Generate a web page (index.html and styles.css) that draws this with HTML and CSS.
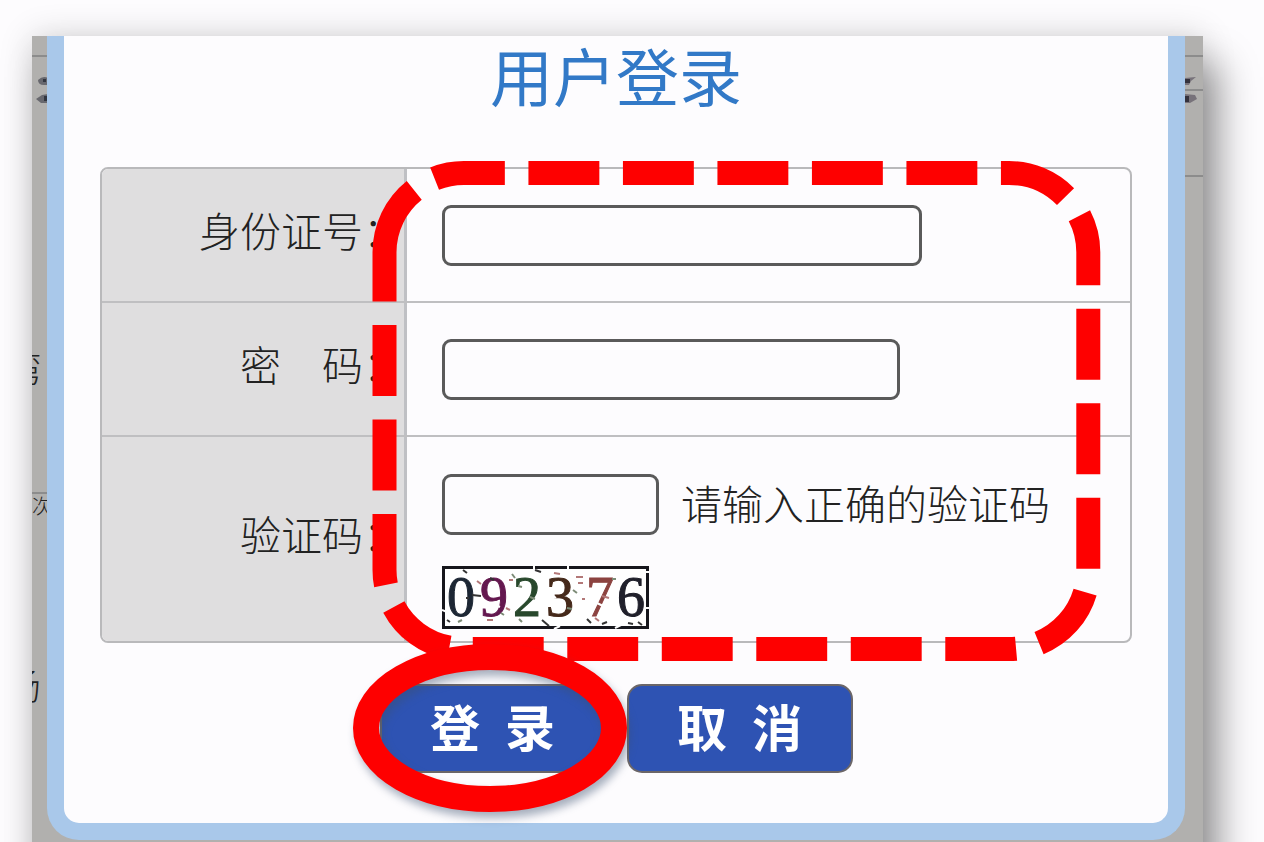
FILE: index.html
```html
<!DOCTYPE html>
<html lang="zh-CN">
<head>
    <meta charset="UTF-8">
    <meta name="viewport" content="width=device-width, initial-scale=1.0">
    <title>用户登录</title>
    <link rel="stylesheet" href="styles.css">
</head>
<body>
    <div class="page">
        <!-- page behind the dialog, only its edges are visible -->
        <div class="backdrop" aria-hidden="true">
            <i class="rule rule-top"></i>
            <i class="rule rule-right rule-nav"></i>
            <i class="rule rule-right rule-banner"></i>
            <i class="rule rule-left rule-box"></i>
            <svg class="smudge smudge-left" viewBox="0 0 16 32">
                <path d="M6 5 Q11 0 16 3 V10 H12 Q6 10 6 5Z M4 24 L10 20 L16 19 V28 H9Z" fill="#68686e"/>
                <path d="M11 4h3v3h-3z M12 21h3v5h-3z" fill="#33363f"/>
            </svg>
            <svg class="smudge smudge-right" viewBox="0 0 16 32">
                <path d="M0 3 L11 2 L6 6 L4 10 H0Z M0 19 L10 20 L12 24 L5 28 H0Z" fill="#77727a"/>
                <path d="M0 4h5v4H0z M0 21h4v6H0z" fill="#35323c"/>
            </svg>
            <span class="ghost ghost-one">湾</span>
            <span class="ghost ghost-two">次</span>
            <span class="ghost ghost-three">场</span>
        </div>

        <form class="dialog">
            <h1 class="title">用户登录</h1>

            <div class="panel">
                <div class="row">
                    <label class="label" for="idNumber">身份证号：</label>
                    <div class="field">
                        <input class="input input-id" type="text" id="idNumber">
                    </div>
                </div>
                <div class="row">
                    <label class="label" for="password">密　码：</label>
                    <div class="field">
                        <input class="input input-password" type="password" id="password">
                    </div>
                </div>
                <div class="row row-captcha">
                    <label class="label" for="captcha">验证码：</label>
                    <div class="field">
                        <div class="captcha-line">
                            <input class="input input-captcha" type="text" id="captcha">
                            <span class="hint">请输入正确的验证码</span>
                        </div>
                        <svg class="captcha" viewBox="0 0 207 63" role="img" aria-label="092376">
                            <rect x="1.5" y="1.5" width="204" height="60" fill="#fff" stroke="#16161c" stroke-width="3"/>
                            <g class="captcha-digits">
                                <text x="5" y="50" fill="#1d2734" stroke="#1d2734">0</text>
                                <text x="38" y="50" fill="#64184f" stroke="#64184f">9</text>
                                <text x="71" y="50" fill="#28482c" stroke="#28482c">2</text>
                                <text x="104" y="50" fill="#45291a" stroke="#45291a">3</text>
                                <text x="144" y="50" fill="#8c4340" stroke="#8c4340">7</text>
                                <text x="175" y="50" fill="#20202b" stroke="#20202b">6</text>
                            </g>
                            <g fill="none" stroke-width="2">
                                <path stroke="#333" d="M21 4l4 3 M93 4l6 2 M30 29l9 1 M5 54l3 2 M100 54l7 6 M48 12l4 2 M160 58l5-2 M186 57l5 1 M196 56l4 3 M24 32h3 M145 53l4 4"/>
                                <path stroke="#b37878" d="M35 15l4 3 M45 54h6 M64 42l4 2 M134 11h7 M136 17h5 M140 33h3 M67 14h4 M112 7l6 1 M153 52l4 3 M160 30l7 2"/>
                                <path stroke="#7d8c77" d="M70 8l3 4 M77 53l3 3 M88 31l5 2 M76 20l4 1 M131 24l4 3 M125 42l5 1 M59 47l3 2 M170 13h4 M16 56l4-2"/>
                                <path stroke="#fff" d="M0 44l5 2 M92 0v4 M126 0v5 M112 63l6-3 M173 62l6-3 M201 6h6 M202 42h5 M13 25l5 2 M52 38l6 3 M110 29l4 3 M155 37l6 3"/>
                            </g>
                        </svg>
                    </div>
                </div>

                <svg class="mark mark-fields" viewBox="0 0 730 502" aria-hidden="true">
                    <path d="M12.5 92.3 A79.3 79.3 0 0 1 91.8 13 H637 A79.3 79.3 0 0 1 716.3 92.3 V409.7 A79.3 79.3 0 0 1 637 489 H91.8 A79.3 79.3 0 0 1 12.5 409.7 Z"
                          fill="none" stroke="#fe0000" stroke-width="24" stroke-dasharray="70.9 23.6"/>
                </svg>
            </div>

            <div class="actions">
                <div class="submit">
                    <button class="button" type="submit">登&ensp;录</button>
                    <svg class="mark mark-submit" viewBox="0 0 274 168" aria-hidden="true">
                        <ellipse cx="137" cy="84" rx="124" ry="71" fill="none" stroke="#fe0000" stroke-width="26"/>
                    </svg>
                </div>
                <button class="button" type="button">取&ensp;消</button>
            </div>
        </form>
    </div>
</body>
</html>
```
FILE: styles.css
```css
* {
    box-sizing: border-box;
}
body {
    margin: 0;
    background-color: #fdfcfe;
    font-family: "Noto Sans CJK SC", sans-serif;
    color: #222;
    overflow: hidden;
}
.page {
    position: relative;
    min-height: 100vh;
    margin: 36px 61px 0 32px;
    padding: 0 18px 40px 15px;
    background-color: #b1b0ae;
    box-shadow: 16px 28px 36px rgba(0, 0, 0, 0.38), 0 0 32px rgba(0, 0, 0, 0.16);
}

/* Backdrop */
.backdrop {
    position: absolute;
    inset: 0;
    overflow: hidden;
}
.rule {
    position: absolute;
    height: 2px;
    background-color: #8c8c8c;
}
.rule-top {
    top: 19px;
    left: 0;
    right: 0;
}
.rule-right {
    right: 0;
    width: 18px;
}
.rule-left {
    left: 0;
    width: 15px;
}
.rule-nav {
    top: 53px;
}
.rule-banner {
    top: 139px;
}
.rule-box {
    top: 456px;
}
.smudge {
    position: absolute;
    top: 39px;
    width: 16px;
    height: 32px;
}
.smudge-left {
    left: 0;
}
.smudge-right {
    right: 2px;
}
.ghost {
    position: absolute;
    font-size: 36px;
    font-weight: 300;
    line-height: 36px;
}
.ghost-one {
    top: 312px;
    left: -27px;
}
.ghost-two {
    top: 458px;
    left: 0;
    font-size: 20px;
    line-height: 24px;
}
.ghost-three {
    top: 630px;
    left: -27px;
}

/* Dialog */
.dialog {
    position: relative;
    padding: 8px 36px 50px;
    background-color: #fdfcfe;
    border: 17px solid #a9c8ea;
    border-top: 0;
    border-radius: 0 0 32px 32px;
}
.title {
    margin: 0 0 63px;
    font-size: 63px;
    font-weight: 400;
    line-height: 60px;
    text-align: center;
    color: #3279c7;
}
.panel {
    position: relative;
    border: 2px solid #b9b9bb;
    border-radius: 8px;
}
.row {
    display: grid;
    grid-template-columns: 305px 1fr;
    min-height: 134px;
    border-bottom: 2px solid #bfbfc1;
}
.row-captcha {
    min-height: 204px;
    border-bottom: 0;
}
.label {
    display: flex;
    align-items: center;
    justify-content: flex-end;
    padding-bottom: 12px;
    background-color: #dfdedf;
    border-right: 3px solid #bfc0c4;
    font-size: 41px;
    font-weight: 300;
}
.row:first-child .label {
    border-top-left-radius: 6px;
}
.row-captcha .label {
    border-bottom-left-radius: 6px;
}
.field {
    display: flex;
    flex-direction: column;
    align-items: flex-start;
    justify-content: center;
    gap: 31px;
    padding-left: 35px;
}
.row-captcha .field {
    padding-top: 24px;
}
.captcha-line {
    display: flex;
    align-items: flex-start;
    gap: 22px;
}
.input {
    height: 61px;
    padding: 0 12px;
    background-color: #fdfcfe;
    border: 3px solid #5a5a5a;
    border-radius: 9px;
    font-size: 32px;
}
.input-id {
    width: 480px;
}
.input-password {
    width: 458px;
}
.input-captcha {
    width: 217px;
}
.hint {
    font-size: 41px;
    font-weight: 300;
    line-height: 56px;
    white-space: nowrap;
}
.captcha {
    display: block;
    width: 207px;
    height: 63px;
}
.captcha-digits {
    font-family: "Liberation Serif", serif;
    font-size: 56px;
}

/* Buttons */
.actions {
    display: flex;
    justify-content: center;
    gap: 21px;
    margin-top: 41px;
}
.submit {
    position: relative;
}
.button {
    width: 226px;
    height: 89px;
    padding: 0 0 8px;
    background-color: #2e53b3;
    border: 2px solid #6b6668;
    border-radius: 15px;
    font-family: inherit;
    font-size: 50px;
    font-weight: 700;
    line-height: 60px;
    color: #fff;
    cursor: pointer;
}

/* Red marks over the form */
.mark {
    position: absolute;
    pointer-events: none;
}
.mark-fields {
    top: -9px;
    left: 270px;
    width: 730px;
    height: 502px;
}
.mark-submit {
    top: -40px;
    left: -27px;
    width: 274px;
    height: 168px;
    overflow: visible;
    filter: drop-shadow(3px 6px 4px rgba(60, 80, 110, 0.45));
}
```
